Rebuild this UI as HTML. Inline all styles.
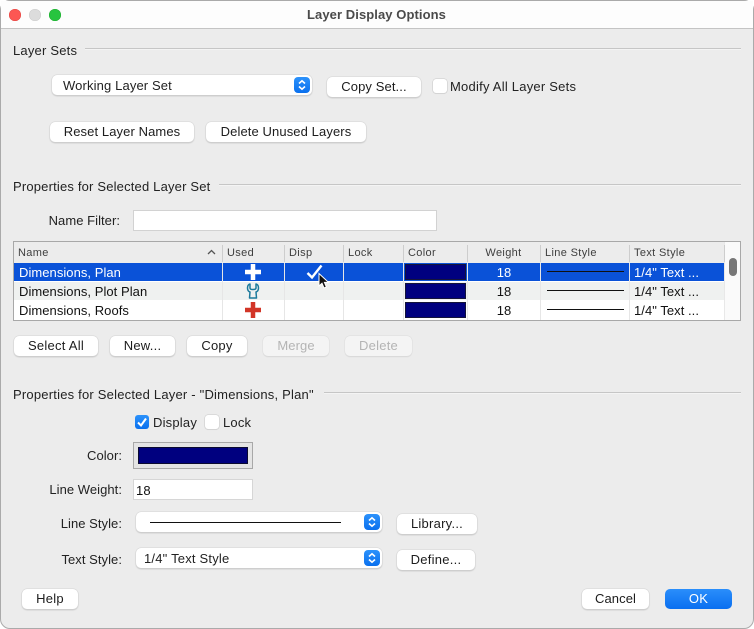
<!DOCTYPE html>
<html><head><meta charset="utf-8"><title>Layer Display Options</title>
<style>
html,body{margin:0;padding:0;width:754px;height:629px;overflow:hidden;background:#fff}
*{box-sizing:border-box}
body{font-family:"Liberation Sans",sans-serif;font-size:13px;color:#222;position:relative}
#win{position:absolute;left:0;top:0;width:754px;height:629px;background:#ececec;border:1px solid #aaa;border-radius:10px;overflow:hidden}
#abs{position:absolute;left:0;top:0;width:754px;height:629px}
#abs>*{position:absolute}
.t{white-space:nowrap;line-height:16px;letter-spacing:.2px;margin-top:1px}
.r{text-align:right;letter-spacing:.05px}
.tb{left:1px;top:1px;width:752px;height:28px;background:#fdfdfd;border-bottom:1px solid #c4c4c4}
.tl{width:12px;height:12px;border-radius:50%}
.hr{height:1px;background:#c6c6c6;border-bottom:1px solid #f4f4f4;box-sizing:content-box}
.btn{background:#fff;border-radius:5px;box-shadow:0 0 0 .5px #d4d4d4,0 1px 1.5px #b4b4b4;height:20px;line-height:20px;text-align:center;color:#1c1c1c;white-space:nowrap;letter-spacing:.25px}
.tight{letter-spacing:.1px}
.dis{background:#f4f4f4;color:#b4b4b4;box-shadow:0 0 0 .5px #ddd,0 1px 1px #d0d0d0}
.pop{background:#fff;border-radius:5px;box-shadow:0 0 0 .5px #d4d4d4,0 1px 1.5px #b4b4b4;height:20px}
.st{width:16px;height:16px;border-radius:4px;background:linear-gradient(#2c92fb,#0a70ee)}
.cb{width:14px;height:14px;border-radius:3px;background:#fff;box-shadow:0 0 0 .5px #c8c8c8,0 .5px 1px #bbb}
.row{left:14px;width:710px;height:18px}
.v{width:2px;background:#e6e6e6}
.hv{width:1px;background:#cdcdcd;top:245px;height:17px}
.th{color:#3e3e3e;font-size:11px;line-height:14px;top:246px;white-space:nowrap;letter-spacing:.35px}
.cell{line-height:18px;white-space:nowrap;color:#111;letter-spacing:.05px;margin-top:1px}
.sw{left:405px;width:61px;height:16px;background:#00007f;border:1px solid #14143a}
.ln{left:547px;width:77px;height:1px;background:#111}
</style></head><body>
<div id="win"></div>
<div id="abs">
<div class="tb"></div>
<div class="tl" style="left:9px;top:9px;background:#fc5753;box-shadow:inset 0 0 0 .5px #df4744"></div>
<div class="tl" style="left:29px;top:9px;background:#dcdcdc;box-shadow:inset 0 0 0 .5px #cbcbcb"></div>
<div class="tl" style="left:49px;top:9px;background:#27c43f;box-shadow:inset 0 0 0 .5px #1dab2e"></div>
<div class="t" style="left:0;width:753px;top:7px;margin-top:0;text-align:center;font-weight:bold;color:#4a4a4a;font-size:13px;letter-spacing:.08px">Layer Display Options</div>

<div class="t" style="left:13px;top:42px">Layer Sets</div>
<div class="hr" style="left:85px;top:48px;width:656px"></div>

<div class="pop" style="left:52px;top:75px;width:260px"></div>
<div class="t" style="left:63px;top:77px;letter-spacing:.13px">Working Layer Set</div>
<div class="st" style="left:294px;top:77px"><svg width="16" height="16"><path d="M5 6.500L8 3.800 11 6.500M5 9.500L8 12.200 11 9.500" fill="none" stroke="#fff" stroke-width="1.600"/></svg></div>
<div class="btn tight" style="left:327px;top:77px;width:94px">Copy Set...</div>
<div class="cb" style="left:433px;top:79px"></div>
<div class="t" style="left:450px;top:78px;letter-spacing:.23px">Modify All Layer Sets</div>

<div class="btn tight" style="left:50px;top:122px;width:144px">Reset Layer Names</div>
<div class="btn tight" style="left:206px;top:122px;width:160px">Delete Unused Layers</div>

<div class="t" style="left:13px;top:178px;letter-spacing:.18px">Properties for Selected Layer Set</div>
<div class="hr" style="left:219px;top:184px;width:522px"></div>

<div class="t r" style="left:20px;width:100px;top:212px">Name Filter:</div>
<div style="left:133px;top:210px;width:304px;height:21px;background:#fff;border:1px solid #d2d2d2"></div>

<!-- table -->
<div style="left:13px;top:241px;width:728px;height:80px;background:#fff;border:1px solid #a8a8a8"></div>
<div style="left:14px;top:242px;width:726px;height:21px;background:#ececec"></div>
<div style="left:724px;top:242px;width:16px;height:78px;background:#fafafa;border-left:1px solid #e8e8e8"></div>
<div style="left:729px;top:258px;width:8px;height:18px;background:#777;border-radius:4px"></div>
<div class="row" style="top:263px;background:#0a52d8"></div>
<div class="row" style="top:282px;background:#eff1f0"></div>
<div class="row" style="top:301px;background:#fff"></div>
<div style="left:14px;top:281px;width:710px;height:1px;background:#fff"></div>
<div style="left:14px;top:300px;width:710px;height:1px;background:#fff"></div>

<div class="hv" style="left:222px"></div><div class="hv" style="left:284px"></div><div class="hv" style="left:343px"></div><div class="hv" style="left:403px"></div><div class="hv" style="left:467px"></div><div class="hv" style="left:540px"></div><div class="hv" style="left:629px"></div><div class="hv" style="left:724px"></div>
<div class="v" style="left:222px;top:263px;height:57px;width:1px"></div><div class="v" style="left:284px;top:263px;height:57px;width:1px"></div><div class="v" style="left:343px;top:263px;height:57px;width:1px"></div><div class="v" style="left:403px;top:263px;height:57px;width:1px"></div><div class="v" style="left:467px;top:263px;height:57px;width:1px"></div><div class="v" style="left:540px;top:263px;height:57px;width:1px"></div><div class="v" style="left:629px;top:263px;height:57px;width:1px"></div>

<div class="th" style="left:18px">Name</div>
<svg style="left:207px;top:249px" width="10" height="6"><path d="M1 5L4.500 1.500 8 5" fill="none" stroke="#555" stroke-width="1.300"/></svg>
<div class="th" style="left:227px">Used</div>
<div class="th" style="left:289px">Disp</div>
<div class="th" style="left:348px">Lock</div>
<div class="th" style="left:408px">Color</div>
<div class="th" style="left:467px;width:73px;text-align:center">Weight</div>
<div class="th" style="left:545px">Line Style</div>
<div class="th" style="left:634px">Text Style</div>

<div class="cell" style="left:19px;top:263px;color:#fff">Dimensions, Plan</div>
<div class="cell" style="left:19px;top:282px">Dimensions, Plot Plan</div>
<div class="cell" style="left:19px;top:301px">Dimensions, Roofs</div>

<svg style="left:245px;top:264px" width="16" height="16"><path d="M5.750 0h4.500v5.750H16v4.500h-5.750V16h-4.500v-5.750H0v-4.500h5.750z" fill="#fff"/></svg>
<svg style="left:245px;top:282px" width="16" height="18"><path d="M5 2C3 2.500 2.500 4.500 2.500 6 2.500 8 3.500 9.500 5 10L4.500 16H11.500L11 10C12.500 9.500 13.500 8 13.500 6 13.500 4.500 13 2.500 11 2V6C11 7.200 10 7.500 8 7.500 6 7.500 5 7.200 5 6Z" fill="none" stroke="#1c7a9c" stroke-width="1.500" stroke-linejoin="round"/></svg>
<svg style="left:245px;top:302px" width="16" height="16"><path d="M5.750 0h4.500v5.750H16v4.500h-5.750V16h-4.500v-5.750H0v-4.500h5.750z" fill="#d23527"/></svg>
<svg style="left:306px;top:264px" width="17" height="16"><path d="M1.500 9L6 13.500 15.500 1.500" fill="none" stroke="#fff" stroke-width="2.400"/></svg>
<svg style="left:317px;top:272px" width="15" height="19"><path d="M2 1.500V14l3-2.800 2 4.800 2.400-1-2-4.600h4.100z" fill="#111" stroke="#fff" stroke-width="1"/></svg>

<div class="sw" style="top:264px"></div><div class="sw" style="top:283px"></div><div class="sw" style="top:302px"></div>
<div class="cell" style="left:468px;width:72px;text-align:center;top:263px;color:#fff">18</div>
<div class="cell" style="left:468px;width:72px;text-align:center;top:282px">18</div>
<div class="cell" style="left:468px;width:72px;text-align:center;top:301px">18</div>
<div class="ln" style="top:271px"></div><div class="ln" style="top:290px"></div><div class="ln" style="top:309px"></div>
<div class="cell" style="left:634px;top:263px;color:#fff">1/4" Text ...</div>
<div class="cell" style="left:634px;top:282px">1/4" Text ...</div>
<div class="cell" style="left:634px;top:301px">1/4" Text ...</div>

<div class="btn" style="left:14px;top:336px;width:84px">Select All</div>
<div class="btn" style="left:110px;top:336px;width:65px">New...</div>
<div class="btn" style="left:187px;top:336px;width:60px">Copy</div>
<div class="btn dis tight" style="left:263px;top:336px;width:66px">Merge</div>
<div class="btn dis" style="left:345px;top:336px;width:67px">Delete</div>

<div class="t" style="left:13px;top:386px;letter-spacing:.21px">Properties for Selected Layer - "Dimensions, Plan"</div>
<div class="hr" style="left:324px;top:392px;width:417px"></div>

<div class="cb" style="left:135px;top:415px;background:linear-gradient(#2c92fb,#0a70ee);box-shadow:none"><svg width="14" height="14" style="display:block"><path d="M3 7.500L6 10.500 11 3.500" fill="none" stroke="#fff" stroke-width="2"/></svg></div>
<div class="t" style="left:153px;top:414px">Display</div>
<div class="cb" style="left:205px;top:415px"></div>
<div class="t" style="left:223px;top:414px">Lock</div>

<div class="t r" style="left:22px;width:100px;top:447px">Color:</div>
<div style="left:133px;top:442px;width:120px;height:27px;background:#e4e4e4;border:1px solid #a8a8a8"></div>
<div style="left:138px;top:447px;width:110px;height:17px;background:#00007f;border:1px solid #0a0a30"></div>

<div class="t r" style="left:22px;width:100px;top:481px">Line Weight:</div>
<div style="left:133px;top:479px;width:120px;height:21px;background:#fff;border:1px solid #d6d6d6"></div>
<div class="t" style="left:136px;top:482px;color:#111">18</div>

<div class="t r" style="left:22px;width:100px;top:515px">Line Style:</div>
<div class="pop" style="left:136px;top:512px;width:246px"></div>
<div style="left:150px;top:522px;width:191px;height:1px;background:#111"></div>
<div class="st" style="left:364px;top:514px"><svg width="16" height="16"><path d="M5 6.500L8 3.800 11 6.500M5 9.500L8 12.200 11 9.500" fill="none" stroke="#fff" stroke-width="1.600"/></svg></div>
<div class="btn" style="left:397px;top:514px;width:80px">Library...</div>

<div class="t r" style="left:22px;width:100px;top:551px">Text Style:</div>
<div class="pop" style="left:136px;top:548px;width:246px"></div>
<div class="t" style="left:144px;top:550px">1/4" Text Style</div>
<div class="st" style="left:364px;top:550px"><svg width="16" height="16"><path d="M5 6.500L8 3.800 11 6.500M5 9.500L8 12.200 11 9.500" fill="none" stroke="#fff" stroke-width="1.600"/></svg></div>
<div class="btn" style="left:397px;top:550px;width:78px">Define...</div>

<div class="btn" style="left:22px;top:589px;width:56px">Help</div>
<div class="btn tight" style="left:582px;top:589px;width:67px">Cancel</div>
<div class="btn" style="left:665px;top:589px;width:67px;background:linear-gradient(#2a8efb,#0a6ff0);color:#fff;box-shadow:none">OK</div>
</div>
</body></html>
